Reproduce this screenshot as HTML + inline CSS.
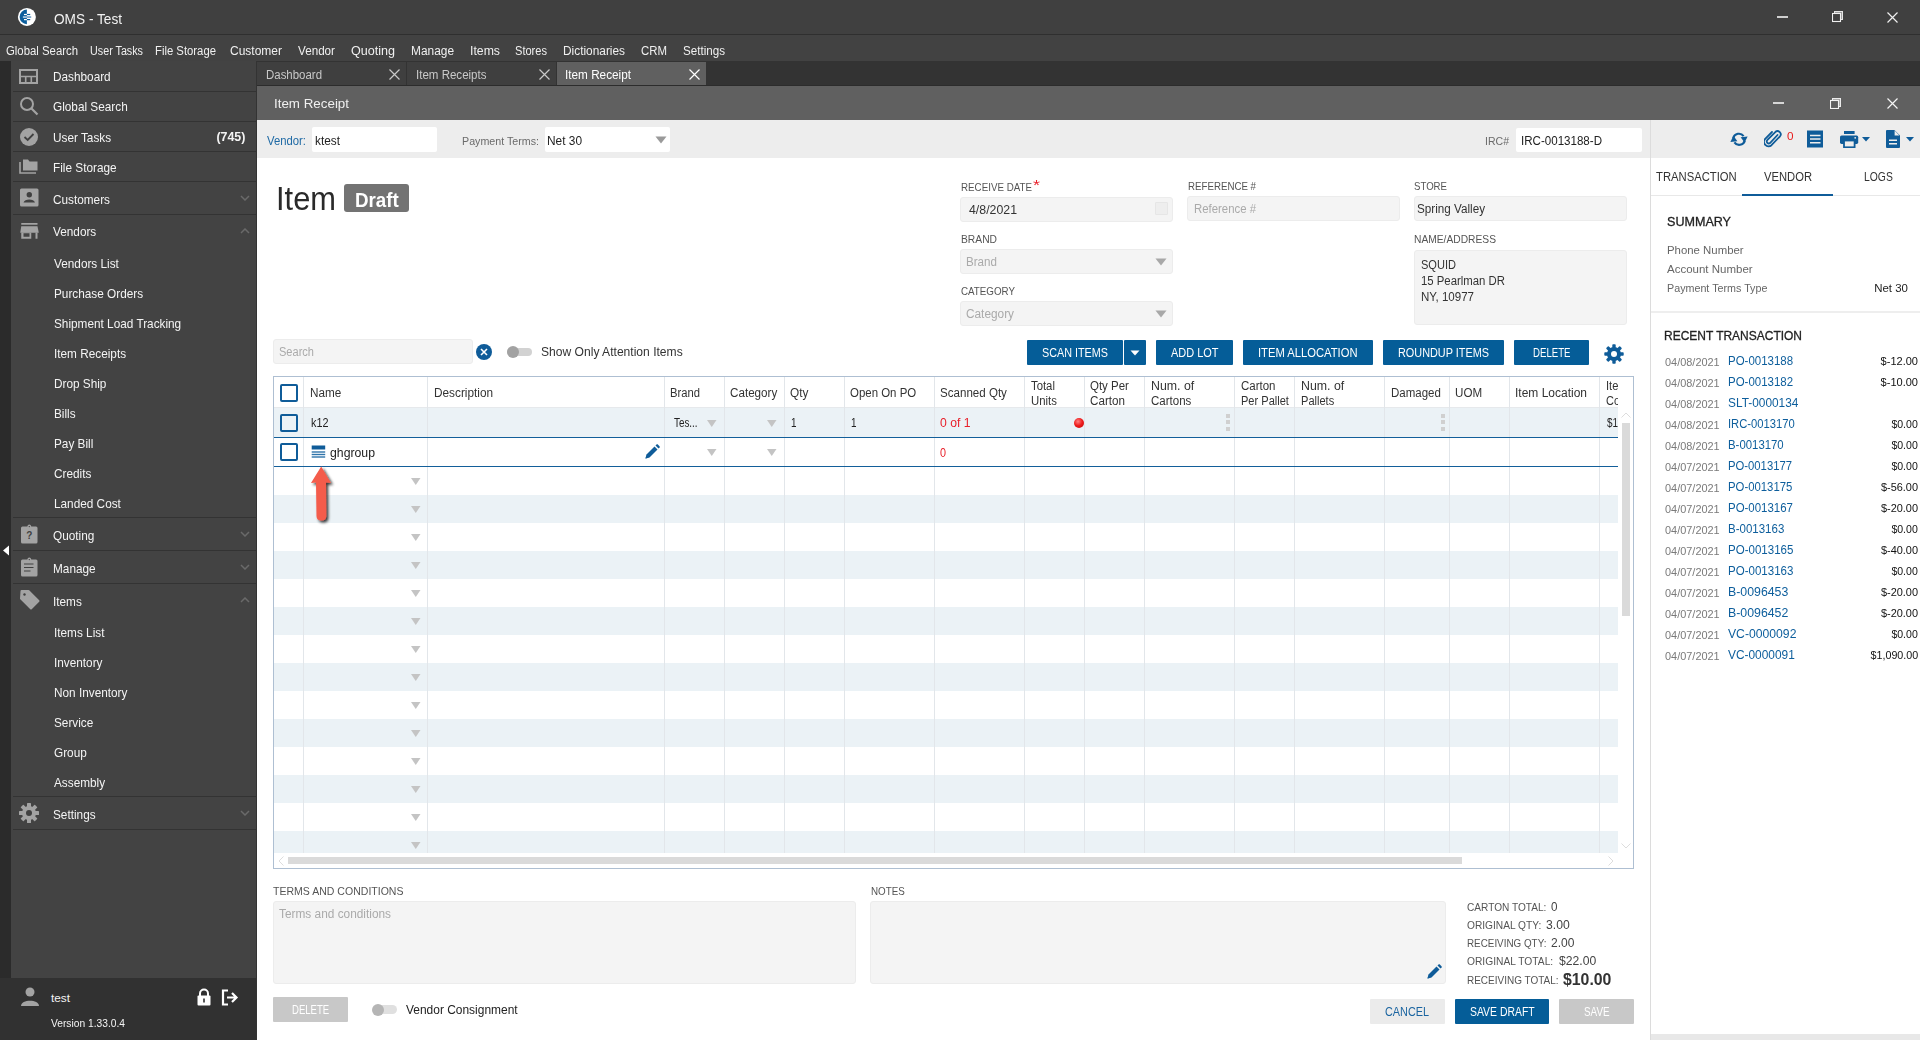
<!DOCTYPE html>
<html><head><meta charset="utf-8"><style>
html,body{margin:0;padding:0;width:1920px;height:1040px;overflow:hidden;background:#fff;font-family:"Liberation Sans",sans-serif;}
body>div,body>svg{position:absolute;box-sizing:border-box;}
</style></head><body>
<div style="left:0px;top:0px;width:1920px;height:34px;background:#404040;"></div>
<div style="left:0px;top:34px;width:1920px;height:1px;background:#2f2f2f;"></div>
<div style="left:0px;top:35px;width:1920px;height:26px;background:#424242;"></div>
<div style="left:0px;top:61px;width:11px;height:979px;background:#2b2b2b;"></div>
<div style="left:11px;top:61px;width:245px;height:917px;background:#434343;"></div>
<div style="left:0px;top:978px;width:256px;height:62px;background:#313131;"></div>
<div style="left:256px;top:61px;width:1px;height:979px;background:#333333;"></div>
<div style="left:257px;top:61px;width:1663px;height:25px;background:#333333;"></div>
<div style="left:257px;top:62px;width:149px;height:23px;background:#3f3f3f;"></div>
<div style="left:407px;top:62px;width:149px;height:23px;background:#3f3f3f;"></div>
<div style="left:557px;top:62px;width:149px;height:23px;background:#606060;"></div>
<div style="left:257px;top:86px;width:1663px;height:34px;background:#606060;"></div>
<div style="left:257px;top:120px;width:1663px;height:38px;background:#ededed;"></div>
<div style="left:257px;top:158px;width:1393px;height:882px;background:#ffffff;"></div>
<div style="left:1650px;top:120px;width:1px;height:920px;background:#dcdcdc;"></div>
<div style="left:1651px;top:158px;width:269px;height:882px;background:#ffffff;"></div>
<svg style="left:17px;top:7px;" width="20" height="20" viewBox="0 0 20 20"><circle cx="9.9" cy="9.9" r="9" fill="#ffffff"/><path d="M9.9 2.6 A7.3 7.3 0 0 0 9.9 17.2 Z" fill="#0b5e9d"/><rect x="7" y="6.9" width="3" height="1.2" fill="#fff"/><rect x="9.9" y="6.9" width="3.3" height="1.2" fill="#0b5e9d"/><rect x="5.9" y="9.4" width="4" height="1.3" fill="#dfe9f2"/><rect x="9.9" y="9.4" width="4.3" height="1.3" fill="#4a86b8"/><rect x="7" y="12" width="3" height="1.2" fill="#fff"/><rect x="9.9" y="12" width="3.3" height="1.2" fill="#0b5e9d"/></svg>
<div style="left:54px;top:8.5px;line-height:20px;font-size:14.5px;color:#f2f2f2;transform:scaleX(0.9412);transform-origin:0 50%;white-space:nowrap;">OMS - Test</div>
<div style="left:1777px;top:16px;width:11px;height:2px;background:#cfcfcf;"></div>
<svg style="left:1832px;top:11px;" width="12" height="12" viewBox="0 0 12 12"><rect x="2.5" y="0.5" width="8" height="8" fill="#9a9a9a" stroke="#e6e6e6"/><rect x="0.5" y="2.5" width="8" height="8" fill="#404040" stroke="#f0f0f0" stroke-width="1.1"/></svg>
<svg style="left:1887px;top:12px;" width="11" height="11" viewBox="0 0 11 11"><path d="M0.5 0.5 L10.5 10.5 M10.5 0.5 L0.5 10.5" stroke="#f0f0f0" stroke-width="1.2"/></svg>
<div style="left:6px;top:41.2px;line-height:20px;font-size:12px;color:#f0f0f0;transform:scaleX(0.9468);transform-origin:0 50%;white-space:nowrap;">Global Search</div>
<div style="left:90px;top:41.2px;line-height:20px;font-size:12px;color:#f0f0f0;transform:scaleX(0.8964);transform-origin:0 50%;white-space:nowrap;">User Tasks</div>
<div style="left:155px;top:41.2px;line-height:20px;font-size:12px;color:#f0f0f0;transform:scaleX(0.9428);transform-origin:0 50%;white-space:nowrap;">File Storage</div>
<div style="left:230px;top:41.2px;line-height:20px;font-size:12px;color:#f0f0f0;transform:scaleX(0.9997);transform-origin:0 50%;white-space:nowrap;">Customer</div>
<div style="left:298px;top:41.2px;line-height:20px;font-size:12px;color:#f0f0f0;transform:scaleX(0.9728);transform-origin:0 50%;white-space:nowrap;">Vendor</div>
<div style="left:351px;top:41.2px;line-height:20px;font-size:12px;color:#f0f0f0;transform:scaleX(1.0469);transform-origin:0 50%;white-space:nowrap;">Quoting</div>
<div style="left:411px;top:41.2px;line-height:20px;font-size:12px;color:#f0f0f0;transform:scaleX(0.9915);transform-origin:0 50%;white-space:nowrap;">Manage</div>
<div style="left:470px;top:41.2px;line-height:20px;font-size:12px;color:#f0f0f0;transform:scaleX(1.0226);transform-origin:0 50%;white-space:nowrap;">Items</div>
<div style="left:515px;top:41.2px;line-height:20px;font-size:12px;color:#f0f0f0;transform:scaleX(0.9226);transform-origin:0 50%;white-space:nowrap;">Stores</div>
<div style="left:563px;top:41.2px;line-height:20px;font-size:12px;color:#f0f0f0;transform:scaleX(0.9890);transform-origin:0 50%;white-space:nowrap;">Dictionaries</div>
<div style="left:641px;top:41.2px;line-height:20px;font-size:12px;color:#f0f0f0;transform:scaleX(0.9514);transform-origin:0 50%;white-space:nowrap;">CRM</div>
<div style="left:683px;top:41.2px;line-height:20px;font-size:12px;color:#f0f0f0;transform:scaleX(0.9686);transform-origin:0 50%;white-space:nowrap;">Settings</div>
<div style="left:13px;top:91px;width:243px;height:1px;background:#333333;"></div>
<div style="left:13px;top:121px;width:243px;height:1px;background:#333333;"></div>
<div style="left:13px;top:151px;width:243px;height:1px;background:#333333;"></div>
<div style="left:13px;top:181px;width:243px;height:1px;background:#333333;"></div>
<div style="left:13px;top:214px;width:243px;height:1px;background:#333333;"></div>
<div style="left:13px;top:517px;width:243px;height:1px;background:#333333;"></div>
<div style="left:13px;top:550px;width:243px;height:1px;background:#333333;"></div>
<div style="left:13px;top:583px;width:243px;height:1px;background:#333333;"></div>
<div style="left:13px;top:796px;width:243px;height:1px;background:#333333;"></div>
<div style="left:13px;top:829px;width:243px;height:1px;background:#333333;"></div>
<div style="left:53px;top:67.2px;line-height:20px;font-size:12.4px;color:#f4f4f4;transform:scaleX(0.9516);transform-origin:0 50%;white-space:nowrap;">Dashboard</div>
<div style="left:53px;top:97.2px;line-height:20px;font-size:12.4px;color:#f4f4f4;transform:scaleX(0.9516);transform-origin:0 50%;white-space:nowrap;">Global Search</div>
<div style="left:53px;top:127.7px;line-height:20px;font-size:12.4px;color:#f4f4f4;transform:scaleX(0.9516);transform-origin:0 50%;white-space:nowrap;">User Tasks</div>
<div style="left:53px;top:157.7px;line-height:20px;font-size:12.4px;color:#f4f4f4;transform:scaleX(0.9516);transform-origin:0 50%;white-space:nowrap;">File Storage</div>
<div style="left:53px;top:189.7px;line-height:20px;font-size:12.4px;color:#f4f4f4;transform:scaleX(0.9516);transform-origin:0 50%;white-space:nowrap;">Customers</div>
<div style="left:53px;top:222.2px;line-height:20px;font-size:12.4px;color:#f4f4f4;transform:scaleX(0.9516);transform-origin:0 50%;white-space:nowrap;">Vendors</div>
<div style="left:53px;top:525.7px;line-height:20px;font-size:12.4px;color:#f4f4f4;transform:scaleX(0.9516);transform-origin:0 50%;white-space:nowrap;">Quoting</div>
<div style="left:53px;top:558.7px;line-height:20px;font-size:12.4px;color:#f4f4f4;transform:scaleX(0.9516);transform-origin:0 50%;white-space:nowrap;">Manage</div>
<div style="left:53px;top:591.7px;line-height:20px;font-size:12.4px;color:#f4f4f4;transform:scaleX(0.9516);transform-origin:0 50%;white-space:nowrap;">Items</div>
<div style="left:53px;top:804.7px;line-height:20px;font-size:12.4px;color:#f4f4f4;transform:scaleX(0.9516);transform-origin:0 50%;white-space:nowrap;">Settings</div>
<div style="right:1674.5px;top:127.3px;line-height:20px;font-size:12.6px;color:#f4f4f4;font-weight:700;transform:scaleX(0.9859);transform-origin:100% 50%;white-space:nowrap;">(745)</div>
<div style="left:54px;top:254.0px;line-height:20px;font-size:12.4px;color:#f4f4f4;transform:scaleX(0.9516);transform-origin:0 50%;white-space:nowrap;">Vendors List</div>
<div style="left:54px;top:283.9px;line-height:20px;font-size:12.4px;color:#f4f4f4;transform:scaleX(0.9516);transform-origin:0 50%;white-space:nowrap;">Purchase Orders</div>
<div style="left:54px;top:313.9px;line-height:20px;font-size:12.4px;color:#f4f4f4;transform:scaleX(0.9516);transform-origin:0 50%;white-space:nowrap;">Shipment Load Tracking</div>
<div style="left:54px;top:343.9px;line-height:20px;font-size:12.4px;color:#f4f4f4;transform:scaleX(0.9516);transform-origin:0 50%;white-space:nowrap;">Item Receipts</div>
<div style="left:54px;top:374.0px;line-height:20px;font-size:12.4px;color:#f4f4f4;transform:scaleX(0.9516);transform-origin:0 50%;white-space:nowrap;">Drop Ship</div>
<div style="left:54px;top:403.9px;line-height:20px;font-size:12.4px;color:#f4f4f4;transform:scaleX(0.9516);transform-origin:0 50%;white-space:nowrap;">Bills</div>
<div style="left:54px;top:434.0px;line-height:20px;font-size:12.4px;color:#f4f4f4;transform:scaleX(0.9516);transform-origin:0 50%;white-space:nowrap;">Pay Bill</div>
<div style="left:54px;top:464.0px;line-height:20px;font-size:12.4px;color:#f4f4f4;transform:scaleX(0.9516);transform-origin:0 50%;white-space:nowrap;">Credits</div>
<div style="left:54px;top:493.9px;line-height:20px;font-size:12.4px;color:#f4f4f4;transform:scaleX(0.9516);transform-origin:0 50%;white-space:nowrap;">Landed Cost</div>
<div style="left:54px;top:622.9px;line-height:20px;font-size:12.4px;color:#f4f4f4;transform:scaleX(0.9516);transform-origin:0 50%;white-space:nowrap;">Items List</div>
<div style="left:54px;top:653.0px;line-height:20px;font-size:12.4px;color:#f4f4f4;transform:scaleX(0.9516);transform-origin:0 50%;white-space:nowrap;">Inventory</div>
<div style="left:54px;top:683.0px;line-height:20px;font-size:12.4px;color:#f4f4f4;transform:scaleX(0.9516);transform-origin:0 50%;white-space:nowrap;">Non Inventory</div>
<div style="left:54px;top:713.0px;line-height:20px;font-size:12.4px;color:#f4f4f4;transform:scaleX(0.9516);transform-origin:0 50%;white-space:nowrap;">Service</div>
<div style="left:54px;top:743.0px;line-height:20px;font-size:12.4px;color:#f4f4f4;transform:scaleX(0.9516);transform-origin:0 50%;white-space:nowrap;">Group</div>
<div style="left:54px;top:772.9px;line-height:20px;font-size:12.4px;color:#f4f4f4;transform:scaleX(0.9516);transform-origin:0 50%;white-space:nowrap;">Assembly</div>
<svg style="left:240px;top:195px;" width="10" height="6" viewBox="0 0 10 6"><path d="M1 1 L5 5 L9 1" fill="none" stroke="#6a6a6a" stroke-width="1.5"/></svg>
<svg style="left:240px;top:228px;" width="10" height="6" viewBox="0 0 10 6"><path d="M1 5 L5 1 L9 5" fill="none" stroke="#6a6a6a" stroke-width="1.5"/></svg>
<svg style="left:240px;top:531px;" width="10" height="6" viewBox="0 0 10 6"><path d="M1 1 L5 5 L9 1" fill="none" stroke="#6a6a6a" stroke-width="1.5"/></svg>
<svg style="left:240px;top:564px;" width="10" height="6" viewBox="0 0 10 6"><path d="M1 1 L5 5 L9 1" fill="none" stroke="#6a6a6a" stroke-width="1.5"/></svg>
<svg style="left:240px;top:597px;" width="10" height="6" viewBox="0 0 10 6"><path d="M1 5 L5 1 L9 5" fill="none" stroke="#6a6a6a" stroke-width="1.5"/></svg>
<svg style="left:240px;top:810px;" width="10" height="6" viewBox="0 0 10 6"><path d="M1 1 L5 5 L9 1" fill="none" stroke="#6a6a6a" stroke-width="1.5"/></svg>
<svg style="left:19px;top:69px;" width="19" height="15" viewBox="0 0 19 15"><rect x="1" y="1" width="17" height="13" fill="none" stroke="#a3a3a3" stroke-width="2"/><path d="M1 7.5 H18 M6.7 7.5 V14 M12.3 7.5 V14" stroke="#a3a3a3" stroke-width="1.6"/></svg>
<svg style="left:19px;top:96px;" width="20" height="20" viewBox="0 0 20 20"><circle cx="8" cy="8" r="6" fill="none" stroke="#a3a3a3" stroke-width="2"/><path d="M12.5 12.5 L18.5 18.5" stroke="#a3a3a3" stroke-width="2.2"/></svg>
<svg style="left:19px;top:127px;" width="20" height="20" viewBox="0 0 20 20"><circle cx="10" cy="10" r="9" fill="#a3a3a3"/><path d="M5.5 10 L8.7 13 L14.5 7" fill="none" stroke="#404040" stroke-width="1.8"/></svg>
<svg style="left:19px;top:158px;" width="20" height="17" viewBox="0 0 20 17"><path d="M1 4 V15 H17" fill="none" stroke="#a3a3a3" stroke-width="1.6"/><path d="M4 1.5 H9 L10.5 3.5 H18.5 V12.5 H4 Z" fill="#a3a3a3"/></svg>
<svg style="left:20px;top:188px;" width="19" height="19" viewBox="0 0 19 19"><rect x="0" y="0.5" width="18.5" height="18" rx="1.5" fill="#a3a3a3"/><circle cx="9.3" cy="6.8" r="2.7" fill="#404040"/><path d="M3.5 14.5 C4.5 10.5 14 10.5 15 14.5 Z" fill="#404040"/></svg>
<svg style="left:20px;top:222px;" width="20" height="18" viewBox="0 0 20 18"><rect x="1.25" y="1" width="16.25" height="1.75" fill="#a3a3a3"/><path d="M1.25 4.25 H17.5 L18.75 10.75 H0.25 Z" fill="#a3a3a3"/><rect x="1.25" y="10.5" width="10" height="6.25" fill="#a3a3a3"/><rect x="3.5" y="11.25" width="6" height="3.5" fill="#434343"/><rect x="15.5" y="10.5" width="2" height="6.25" fill="#a3a3a3"/></svg>
<svg style="left:20px;top:524px;" width="19" height="20" viewBox="0 0 19 20"><rect x="1" y="2.5" width="16.5" height="17" rx="1.5" fill="#a3a3a3"/><circle cx="9.3" cy="2.3" r="1.8" fill="#a3a3a3"/><circle cx="9.3" cy="2.6" r="0.7" fill="#404040"/><text x="9.3" y="15" font-size="10" font-weight="700" fill="#404040" text-anchor="middle" font-family="Liberation Sans">?</text></svg>
<svg style="left:20px;top:557px;" width="19" height="20" viewBox="0 0 19 20"><rect x="1" y="2.5" width="16.5" height="17" rx="1.5" fill="#a3a3a3"/><circle cx="9.3" cy="2.3" r="1.8" fill="#a3a3a3"/><circle cx="9.3" cy="2.6" r="0.7" fill="#404040"/><path d="M4 7 H13.5 M4 10.5 H13.5 M4 14 H10.5" stroke="#404040" stroke-width="1.2"/></svg>
<svg style="left:19px;top:590px;" width="21" height="21" viewBox="0 0 21 21"><path d="M2.5 1 H9.5 L19.5 11 L12 18.5 L2 8.5 Z" fill="#a3a3a3" stroke="#a3a3a3" stroke-width="2" stroke-linejoin="round"/><circle cx="5.5" cy="4.5" r="1.2" fill="#404040"/></svg>
<svg style="left:19px;top:803px;" width="20" height="20" viewBox="0 0 20 20"><rect x="8" y="0" width="4" height="20" rx="0.6" fill="#a3a3a3" transform="rotate(0 10 10)"/><rect x="8" y="0" width="4" height="20" rx="0.6" fill="#a3a3a3" transform="rotate(45 10 10)"/><rect x="8" y="0" width="4" height="20" rx="0.6" fill="#a3a3a3" transform="rotate(90 10 10)"/><rect x="8" y="0" width="4" height="20" rx="0.6" fill="#a3a3a3" transform="rotate(135 10 10)"/><circle cx="10" cy="10" r="7" fill="#a3a3a3"/><circle cx="10" cy="10" r="3" fill="#404040"/></svg>
<svg style="left:2px;top:545px;" width="8" height="11" viewBox="0 0 8 11"><path d="M1 5.5 L7 0.5 V10.5 Z" fill="#ffffff"/></svg>
<svg style="left:20px;top:987px;" width="20" height="20" viewBox="0 0 20 20"><circle cx="10" cy="5" r="4.5" fill="#a3a3a3"/><path d="M1 19 C1 12 19 12 19 19 Z" fill="#a3a3a3"/></svg>
<div style="left:51px;top:987.5px;line-height:20px;font-size:11.8px;color:#f4f4f4;white-space:nowrap;">test</div>
<div style="left:51px;top:1013.0px;line-height:20px;font-size:11px;color:#f4f4f4;transform:scaleX(0.9308);transform-origin:0 50%;white-space:nowrap;">Version 1.33.0.4</div>
<svg style="left:196px;top:988px;" width="16" height="18" viewBox="0 0 16 18"><path d="M4 8 V5.5 A4 4 0 0 1 12 5.5 V8" fill="none" stroke="#fff" stroke-width="2"/><rect x="1.5" y="7.5" width="13" height="10" rx="1" fill="#fff"/><rect x="7.2" y="10.5" width="1.6" height="4" fill="#2e2e2e"/></svg>
<svg style="left:221px;top:989px;" width="18" height="17" viewBox="0 0 18 17"><path d="M7 1.5 H2 V15.5 H7" fill="none" stroke="#fff" stroke-width="2.2"/><path d="M6 8.5 H15 M11 4 L15.5 8.5 L11 13" fill="none" stroke="#fff" stroke-width="2.2"/></svg>
<div style="left:265.5px;top:65.0px;line-height:20px;font-size:12px;color:#c9c9c9;transform:scaleX(0.9539);transform-origin:0 50%;white-space:nowrap;">Dashboard</div>
<div style="left:415.5px;top:65.0px;line-height:20px;font-size:12px;color:#c9c9c9;transform:scaleX(0.9610);transform-origin:0 50%;white-space:nowrap;">Item Receipts</div>
<div style="left:565px;top:65.0px;line-height:20px;font-size:12px;color:#ffffff;transform:scaleX(0.9798);transform-origin:0 50%;white-space:nowrap;">Item Receipt</div>
<svg style="left:389px;top:69px;" width="11" height="11" viewBox="0 0 11 11"><path d="M0.5 0.5 L10.5 10.5 M10.5 0.5 L0.5 10.5" stroke="#c9c9c9" stroke-width="1.2"/></svg>
<svg style="left:539px;top:69px;" width="11" height="11" viewBox="0 0 11 11"><path d="M0.5 0.5 L10.5 10.5 M10.5 0.5 L0.5 10.5" stroke="#c9c9c9" stroke-width="1.2"/></svg>
<svg style="left:689px;top:69px;" width="11" height="11" viewBox="0 0 11 11"><path d="M0.5 0.5 L10.5 10.5 M10.5 0.5 L0.5 10.5" stroke="#ffffff" stroke-width="1.2"/></svg>
<div style="left:257px;top:85px;width:1663px;height:1px;background:#2c2c2c;"></div>
<div style="left:273.5px;top:94.0px;line-height:20px;font-size:13.5px;color:#f0f0f0;transform:scaleX(0.9897);transform-origin:0 50%;white-space:nowrap;">Item Receipt</div>
<div style="left:1773px;top:102px;width:11px;height:2px;background:#d6d6d6;"></div>
<svg style="left:1830px;top:98px;" width="12" height="11" viewBox="0 0 12 11"><rect x="2.5" y="0.5" width="8" height="8" fill="#a8a8a8" stroke="#ececec"/><rect x="0.5" y="2.5" width="8" height="8" fill="#606060" stroke="#f4f4f4" stroke-width="1.1"/></svg>
<svg style="left:1887px;top:98px;" width="11" height="11" viewBox="0 0 11 11"><path d="M0.5 0.5 L10.5 10.5 M10.5 0.5 L0.5 10.5" stroke="#f4f4f4" stroke-width="1.2"/></svg>
<div style="left:267px;top:130.8px;line-height:20px;font-size:12px;color:#1f6aa5;transform:scaleX(0.9427);transform-origin:0 50%;white-space:nowrap;">Vendor:</div>
<div style="left:312px;top:127px;width:125px;height:25px;background:#ffffff;border-radius:2px;"></div>
<div style="left:314.5px;top:130.8px;line-height:20px;font-size:12px;color:#222222;transform:scaleX(0.9865);transform-origin:0 50%;white-space:nowrap;">ktest</div>
<div style="left:462px;top:130.8px;line-height:20px;font-size:11.5px;color:#6b6b6b;transform:scaleX(0.9291);transform-origin:0 50%;white-space:nowrap;">Payment Terms:</div>
<div style="left:545px;top:127px;width:125px;height:25px;background:#ffffff;border-radius:2px;"></div>
<div style="left:547px;top:130.8px;line-height:20px;font-size:12px;color:#222222;transform:scaleX(0.9899);transform-origin:0 50%;white-space:nowrap;">Net 30</div>
<svg style="left:655px;top:136px;" width="12" height="8" viewBox="0 0 12 8"><path d="M0.5 0.5 H11.5 L6 7.5 Z" fill="#9a9a9a"/></svg>
<div style="left:1485px;top:130.8px;line-height:20px;font-size:11.5px;color:#6b6b6b;transform:scaleX(0.9160);transform-origin:0 50%;white-space:nowrap;">IRC#</div>
<div style="left:1516px;top:128px;width:126px;height:24px;background:#ffffff;border-radius:2px;"></div>
<div style="left:1521px;top:130.8px;line-height:20px;font-size:12px;color:#222222;transform:scaleX(0.9638);transform-origin:0 50%;white-space:nowrap;">IRC-0013188-D</div>
<svg style="left:1729px;top:130px;" width="20" height="18" viewBox="0 0 20 18"><path d="M4.2 8.2 A5.8 5.8 0 0 1 14.6 6.2" fill="none" stroke="#0f5c99" stroke-width="2.1"/><path d="M11.6 7.2 L18.6 6.4 L15.6 12.6 Z" fill="#0f5c99"/><path d="M15.8 10.6 A5.8 5.8 0 0 1 5.4 12.3" fill="none" stroke="#0f5c99" stroke-width="2.1"/><path d="M8.4 11.2 L1.4 12 L4.4 5.8 Z" fill="#0f5c99"/></svg>
<svg style="left:1764px;top:129px;" width="18" height="20" viewBox="0 0 18 20"><path d="M13.5 6 L6 14 A2 2 0 0 1 3.2 11.2 L11.5 2.8 A3.2 3.2 0 0 1 16 7.3 L7.5 16.2 A4.5 4.5 0 0 1 1.2 9.8 L8 3" fill="none" stroke="#0f5c99" stroke-width="1.8" stroke-linecap="round"/></svg>
<div style="left:1786.5px;top:127.0px;line-height:20px;font-size:10px;color:#e81b1b;transform:scaleX(1.1687);transform-origin:0 50%;white-space:nowrap;">0</div>
<svg style="left:1806px;top:129px;" width="18" height="20" viewBox="0 0 18 20"><path d="M1 1 L2 2 L3 1 L4 2 L5 1 L6 2 L7 1 L8 2 L9 1 L10 2 L11 1 L12 2 L13 1 L14 2 L15 1 L16 2 L17 1 V19 L16 18 L15 19 L14 18 L13 19 L12 18 L11 19 L10 18 L9 19 L8 18 L7 19 L6 18 L5 19 L4 18 L3 19 L2 18 L1 19 Z" fill="#0f5c99"/><path d="M4 6.6 H14.5 M4 10.1 H14.5 M4 13.8 H14.5" stroke="#ededed" stroke-width="1.5"/></svg>
<svg style="left:1840px;top:130px;" width="19" height="18" viewBox="0 0 19 18"><rect x="4" y="1" width="10.6" height="3" fill="#0f5c99"/><rect x="0" y="5.6" width="18.2" height="8.3" rx="1.6" fill="#0f5c99"/><rect x="4" y="10.5" width="10.6" height="6.8" fill="#ededed" stroke="#0f5c99" stroke-width="1.8"/><circle cx="15.2" cy="7.8" r="0.9" fill="#ededed"/></svg>
<svg style="left:1862px;top:137px;" width="8" height="5" viewBox="0 0 8 5"><path d="M0 0 H8 L4 4.5 Z" fill="#0f5c99"/></svg>
<svg style="left:1886px;top:129px;" width="15" height="20" viewBox="0 0 15 20"><path d="M0 2 Q0 1 1 1 H8.4 L14 6.6 V18 Q14 19 13 19 H1 Q0 19 0 18 Z" fill="#0f5c99"/><path d="M8.6 1.6 V6.4 H13.4 Z" fill="#ededed"/><path d="M3 11.2 H11 M3 14.8 H11" stroke="#ededed" stroke-width="1.6"/></svg>
<svg style="left:1906px;top:137px;" width="8" height="5" viewBox="0 0 8 5"><path d="M0 0 H8 L4 4.5 Z" fill="#0f5c99"/></svg>
<div style="left:1656px;top:166.5px;line-height:20px;font-size:12px;color:#333333;transform:scaleX(0.9383);transform-origin:0 50%;white-space:nowrap;">TRANSACTION</div>
<div style="left:1763.7px;top:166.5px;line-height:20px;font-size:12px;color:#333333;transform:scaleX(0.9349);transform-origin:0 50%;white-space:nowrap;">VENDOR</div>
<div style="left:1864.2px;top:166.5px;line-height:20px;font-size:12px;color:#333333;transform:scaleX(0.8637);transform-origin:0 50%;white-space:nowrap;">LOGS</div>
<div style="left:1651px;top:195px;width:269px;height:1px;background:#e8e8e8;"></div>
<div style="left:1742px;top:193.5px;width:91px;height:2.5px;background:#0f5c99;"></div>
<div style="left:275.8px;top:188.8px;line-height:20px;font-size:33px;color:#2a2a2a;transform:scaleX(0.9349);transform-origin:0 50%;white-space:nowrap;">Item</div>
<div style="left:344px;top:184px;width:65px;height:28px;background:#737373;border-radius:3px;"></div>
<div style="left:355px;top:190.0px;line-height:20px;font-size:20px;color:#ffffff;font-weight:700;transform:scaleX(0.9385);transform-origin:0 50%;white-space:nowrap;">Draft</div>
<div style="left:961px;top:177.3px;line-height:20px;font-size:11.5px;color:#555555;transform:scaleX(0.8503);transform-origin:0 50%;white-space:nowrap;">RECEIVE DATE</div>
<div style="left:1032.5px;top:174.5px;line-height:20px;font-size:14px;color:#e8202a;transform:scaleX(1.2849);transform-origin:0 50%;white-space:nowrap;">*</div>
<div style="left:960px;top:197px;width:213px;height:25px;background:#f4f4f4;border-radius:3px;border:1px solid #ececec;"></div>
<div style="left:969px;top:200.3px;line-height:20px;font-size:12px;color:#333333;transform:scaleX(1.0276);transform-origin:0 50%;white-space:nowrap;">4/8/2021</div>
<div style="left:1155px;top:202px;width:13px;height:13px;background:#eeeeee;border-radius:1px;border:1px solid #e6e6e6;"></div>
<div style="left:1187.5px;top:176.3px;line-height:20px;font-size:11.5px;color:#555555;transform:scaleX(0.8445);transform-origin:0 50%;white-space:nowrap;">REFERENCE #</div>
<div style="left:1187px;top:196px;width:213px;height:25px;background:#f4f4f4;border-radius:3px;border:1px solid #ececec;"></div>
<div style="left:1193.5px;top:198.5px;line-height:20px;font-size:12px;color:#aaaaaa;transform:scaleX(0.9484);transform-origin:0 50%;white-space:nowrap;">Reference #</div>
<div style="left:961px;top:228.6px;line-height:20px;font-size:11.5px;color:#555555;transform:scaleX(0.8943);transform-origin:0 50%;white-space:nowrap;">BRAND</div>
<div style="left:960px;top:249px;width:213px;height:25px;background:#f4f4f4;border-radius:3px;border:1px solid #ececec;"></div>
<div style="left:965.5px;top:251.5px;line-height:20px;font-size:12px;color:#aaaaaa;transform:scaleX(0.9681);transform-origin:0 50%;white-space:nowrap;">Brand</div>
<svg style="left:1155px;top:258px;" width="12" height="8" viewBox="0 0 12 8"><path d="M0.5 0.5 H11.5 L6 7.5 Z" fill="#a8a8a8"/></svg>
<div style="left:961px;top:280.6px;line-height:20px;font-size:11.5px;color:#555555;transform:scaleX(0.8507);transform-origin:0 50%;white-space:nowrap;">CATEGORY</div>
<div style="left:960px;top:301px;width:213px;height:25px;background:#f4f4f4;border-radius:3px;border:1px solid #ececec;"></div>
<div style="left:965.5px;top:303.5px;line-height:20px;font-size:12px;color:#aaaaaa;transform:scaleX(0.9858);transform-origin:0 50%;white-space:nowrap;">Category</div>
<svg style="left:1155px;top:310px;" width="12" height="8" viewBox="0 0 12 8"><path d="M0.5 0.5 H11.5 L6 7.5 Z" fill="#a8a8a8"/></svg>
<div style="left:1414px;top:176.3px;line-height:20px;font-size:11.5px;color:#555555;transform:scaleX(0.8374);transform-origin:0 50%;white-space:nowrap;">STORE</div>
<div style="left:1414px;top:196px;width:213px;height:25px;background:#f4f4f4;border-radius:3px;border:1px solid #ececec;"></div>
<div style="left:1416.5px;top:198.5px;line-height:20px;font-size:12px;color:#333333;transform:scaleX(0.9740);transform-origin:0 50%;white-space:nowrap;">Spring Valley</div>
<div style="left:1414px;top:228.7px;line-height:20px;font-size:11.5px;color:#555555;transform:scaleX(0.8911);transform-origin:0 50%;white-space:nowrap;">NAME/ADDRESS</div>
<div style="left:1414px;top:250px;width:213px;height:75px;background:#f4f4f4;border-radius:3px;border:1px solid #ececec;"></div>
<div style="left:1420.5px;top:254.5px;line-height:20px;font-size:12px;color:#333333;transform:scaleX(0.9209);transform-origin:0 50%;white-space:nowrap;">SQUID</div>
<div style="left:1420.5px;top:270.7px;line-height:20px;font-size:12px;color:#333333;transform:scaleX(0.9469);transform-origin:0 50%;white-space:nowrap;">15 Pearlman DR</div>
<div style="left:1420.5px;top:286.7px;line-height:20px;font-size:12px;color:#333333;transform:scaleX(0.9608);transform-origin:0 50%;white-space:nowrap;">NY, 10977</div>
<div style="left:273px;top:339px;width:200px;height:25px;background:#f4f4f4;border-radius:3px;border:1px solid #ececec;"></div>
<div style="left:279px;top:341.5px;line-height:20px;font-size:12px;color:#aaaaaa;transform:scaleX(0.9205);transform-origin:0 50%;white-space:nowrap;">Search</div>
<svg style="left:476px;top:344px;" width="16" height="16" viewBox="0 0 16 16"><circle cx="8" cy="8" r="8" fill="#0f5c99"/><path d="M5 5 L11 11 M11 5 L5 11" stroke="#fff" stroke-width="1.6"/></svg>
<div style="left:507px;top:348px;width:25px;height:8px;background:#d2d2d2;border-radius:4px;"></div>
<svg style="left:506px;top:345px;" width="14" height="14" viewBox="0 0 14 14"><circle cx="7" cy="7" r="6" fill="#a2a2a2"/></svg>
<div style="left:541px;top:341.7px;line-height:20px;font-size:12px;color:#333333;transform:scaleX(1.0068);transform-origin:0 50%;white-space:nowrap;">Show Only Attention Items</div>
<div style="left:1027px;top:340px;width:96px;height:25px;background:#055d98;border-radius:1px;"></div>
<div style="left:1042.0px;top:342.5px;line-height:20px;font-size:12px;color:#ffffff;transform:scaleX(0.8999);transform-origin:0 50%;white-space:nowrap;">SCAN ITEMS</div>
<div style="left:1124px;top:340px;width:22px;height:25px;background:#055d98;border-radius:1px;"></div>
<svg style="left:1130px;top:350px;" width="10" height="6" viewBox="0 0 10 6"><path d="M0.5 0.5 H9.5 L5 5.5 Z" fill="#ffffff"/></svg>
<div style="left:1156px;top:340px;width:77px;height:25px;background:#055d98;border-radius:1px;"></div>
<div style="left:1170.75px;top:342.5px;line-height:20px;font-size:12px;color:#ffffff;transform:scaleX(0.9133);transform-origin:0 50%;white-space:nowrap;">ADD LOT</div>
<div style="left:1243px;top:340px;width:130px;height:25px;background:#055d98;border-radius:1px;"></div>
<div style="left:1258.25px;top:342.5px;line-height:20px;font-size:12px;color:#ffffff;transform:scaleX(0.9346);transform-origin:0 50%;white-space:nowrap;">ITEM ALLOCATION</div>
<div style="left:1383px;top:340px;width:121px;height:25px;background:#055d98;border-radius:1px;"></div>
<div style="left:1398.0px;top:342.5px;line-height:20px;font-size:12px;color:#ffffff;transform:scaleX(0.9059);transform-origin:0 50%;white-space:nowrap;">ROUNDUP ITEMS</div>
<div style="left:1514px;top:340px;width:75px;height:25px;background:#055d98;border-radius:1px;"></div>
<div style="left:1532.75px;top:342.5px;line-height:20px;font-size:12px;color:#ffffff;transform:scaleX(0.8033);transform-origin:0 50%;white-space:nowrap;">DELETE</div>
<svg style="left:1604px;top:344px;" width="20" height="20" viewBox="0 0 20 20"><rect x="8.3" y="0.3" width="3.4" height="19.4" rx="0.8" fill="#0f5c99" transform="rotate(0 10 10)"/><rect x="8.3" y="0.3" width="3.4" height="19.4" rx="0.8" fill="#0f5c99" transform="rotate(45 10 10)"/><rect x="8.3" y="0.3" width="3.4" height="19.4" rx="0.8" fill="#0f5c99" transform="rotate(90 10 10)"/><rect x="8.3" y="0.3" width="3.4" height="19.4" rx="0.8" fill="#0f5c99" transform="rotate(135 10 10)"/><circle cx="10" cy="10" r="7" fill="#0f5c99"/><circle cx="10" cy="10" r="3" fill="#ffffff"/></svg>
<div style="left:273px;top:376px;width:1361px;height:493px;background:#ffffff;border:1px solid #aebfd2;"></div>
<div style="left:274px;top:408px;width:1344px;height:29px;background:#ebf2f6;"></div>
<div style="left:274px;top:495px;width:1344px;height:28px;background:#ebf2f6;"></div>
<div style="left:274px;top:551px;width:1344px;height:28px;background:#ebf2f6;"></div>
<div style="left:274px;top:607px;width:1344px;height:28px;background:#ebf2f6;"></div>
<div style="left:274px;top:663px;width:1344px;height:28px;background:#ebf2f6;"></div>
<div style="left:274px;top:719px;width:1344px;height:28px;background:#ebf2f6;"></div>
<div style="left:274px;top:775px;width:1344px;height:28px;background:#ebf2f6;"></div>
<div style="left:274px;top:831px;width:1344px;height:22px;background:#ebf2f6;"></div>
<div style="left:274px;top:407px;width:1344px;height:1px;background:#e6e9ec;"></div>
<div style="left:303px;top:377px;width:1px;height:476px;background:#e2e6ea;"></div>
<div style="left:427px;top:377px;width:1px;height:476px;background:#e2e6ea;"></div>
<div style="left:664px;top:377px;width:1px;height:476px;background:#e2e6ea;"></div>
<div style="left:724px;top:377px;width:1px;height:476px;background:#e2e6ea;"></div>
<div style="left:784px;top:377px;width:1px;height:476px;background:#e2e6ea;"></div>
<div style="left:844px;top:377px;width:1px;height:476px;background:#e2e6ea;"></div>
<div style="left:934px;top:377px;width:1px;height:476px;background:#e2e6ea;"></div>
<div style="left:1024px;top:377px;width:1px;height:476px;background:#e2e6ea;"></div>
<div style="left:1084px;top:377px;width:1px;height:476px;background:#e2e6ea;"></div>
<div style="left:1144px;top:377px;width:1px;height:476px;background:#e2e6ea;"></div>
<div style="left:1234px;top:377px;width:1px;height:476px;background:#e2e6ea;"></div>
<div style="left:1294px;top:377px;width:1px;height:476px;background:#e2e6ea;"></div>
<div style="left:1384px;top:377px;width:1px;height:476px;background:#e2e6ea;"></div>
<div style="left:1449px;top:377px;width:1px;height:476px;background:#e2e6ea;"></div>
<div style="left:1509px;top:377px;width:1px;height:476px;background:#e2e6ea;"></div>
<div style="left:1599px;top:377px;width:1px;height:476px;background:#e2e6ea;"></div>
<div style="left:274px;top:437px;width:1344px;height:1.3px;background:#135f9a;"></div>
<div style="left:274px;top:466px;width:1344px;height:1.3px;background:#135f9a;"></div>
<div style="left:309.5px;top:382.8px;line-height:20px;font-size:12px;color:#333333;transform:scaleX(0.9778);transform-origin:0 50%;white-space:nowrap;">Name</div>
<div style="left:434.2px;top:382.8px;line-height:20px;font-size:12px;color:#333333;transform:scaleX(0.9846);transform-origin:0 50%;white-space:nowrap;">Description</div>
<div style="left:670.3px;top:382.8px;line-height:20px;font-size:12px;color:#333333;transform:scaleX(0.9368);transform-origin:0 50%;white-space:nowrap;">Brand</div>
<div style="left:730.3px;top:382.8px;line-height:20px;font-size:12px;color:#333333;transform:scaleX(0.9714);transform-origin:0 50%;white-space:nowrap;">Category</div>
<div style="left:790.3px;top:382.8px;line-height:20px;font-size:12px;color:#333333;transform:scaleX(0.9857);transform-origin:0 50%;white-space:nowrap;">Qty</div>
<div style="left:850.3px;top:382.8px;line-height:20px;font-size:12px;color:#333333;transform:scaleX(0.9543);transform-origin:0 50%;white-space:nowrap;">Open On PO</div>
<div style="left:940px;top:382.8px;line-height:20px;font-size:12px;color:#333333;transform:scaleX(0.9643);transform-origin:0 50%;white-space:nowrap;">Scanned Qty</div>
<div style="left:1390.6px;top:382.8px;line-height:20px;font-size:12px;color:#333333;transform:scaleX(0.9590);transform-origin:0 50%;white-space:nowrap;">Damaged</div>
<div style="left:1455.4px;top:382.8px;line-height:20px;font-size:12px;color:#333333;transform:scaleX(0.9680);transform-origin:0 50%;white-space:nowrap;">UOM</div>
<div style="left:1515.4px;top:382.8px;line-height:20px;font-size:12px;color:#333333;transform:scaleX(0.9994);transform-origin:0 50%;white-space:nowrap;">Item Location</div>
<div style="left:1030.8px;top:375.8px;line-height:20px;font-size:12px;color:#333333;transform:scaleX(0.9429);transform-origin:0 50%;white-space:nowrap;">Total</div>
<div style="left:1030.8px;top:390.8px;line-height:20px;font-size:12px;color:#333333;transform:scaleX(0.9473);transform-origin:0 50%;white-space:nowrap;">Units</div>
<div style="left:1090.3px;top:375.8px;line-height:20px;font-size:12px;color:#333333;transform:scaleX(0.9563);transform-origin:0 50%;white-space:nowrap;">Qty Per</div>
<div style="left:1090.3px;top:390.8px;line-height:20px;font-size:12px;color:#333333;transform:scaleX(0.9717);transform-origin:0 50%;white-space:nowrap;">Carton</div>
<div style="left:1150.5px;top:375.8px;line-height:20px;font-size:12px;color:#333333;transform:scaleX(1.0307);transform-origin:0 50%;white-space:nowrap;">Num. of</div>
<div style="left:1150.5px;top:390.8px;line-height:20px;font-size:12px;color:#333333;transform:scaleX(0.9591);transform-origin:0 50%;white-space:nowrap;">Cartons</div>
<div style="left:1240.8px;top:375.8px;line-height:20px;font-size:12px;color:#333333;transform:scaleX(0.9578);transform-origin:0 50%;white-space:nowrap;">Carton</div>
<div style="left:1240.8px;top:390.8px;line-height:20px;font-size:12px;color:#333333;transform:scaleX(0.9207);transform-origin:0 50%;white-space:nowrap;">Per Pallet</div>
<div style="left:1300.5px;top:375.8px;line-height:20px;font-size:12px;color:#333333;transform:scaleX(1.0307);transform-origin:0 50%;white-space:nowrap;">Num. of</div>
<div style="left:1300.5px;top:390.8px;line-height:20px;font-size:12px;color:#333333;transform:scaleX(0.9217);transform-origin:0 50%;white-space:nowrap;">Pallets</div>
<div style="left:1605.5px;top:375.8px;line-height:20px;font-size:12px;color:#333333;transform:scaleX(0.9294);transform-origin:0 50%;white-space:nowrap;">Ite</div>
<div style="left:1605.5px;top:390.8px;line-height:20px;font-size:12px;color:#333333;transform:scaleX(0.9126);transform-origin:0 50%;white-space:nowrap;">Co</div>
<div style="left:1618px;top:377px;width:15px;height:30px;background:#ffffff;"></div>
<div style="left:280px;top:384px;width:18px;height:18px;background:transparent;border:2px solid #0f5c99;border-radius:2px;"></div>
<div style="left:280px;top:414px;width:18px;height:18px;background:transparent;border:2px solid #0f5c99;border-radius:2px;"></div>
<div style="left:280px;top:443px;width:18px;height:18px;background:transparent;border:2px solid #0f5c99;border-radius:2px;"></div>
<div style="left:311px;top:413.3px;line-height:20px;font-size:12px;color:#222222;transform:scaleX(0.9045);transform-origin:0 50%;white-space:nowrap;">k12</div>
<div style="left:673.9px;top:413.3px;line-height:20px;font-size:12px;color:#222222;transform:scaleX(0.8230);transform-origin:0 50%;white-space:nowrap;">Tes...</div>
<svg style="left:706.7px;top:420px;" width="10" height="7" viewBox="0 0 10 7"><path d="M0 0 H9.5 L4.75 7 Z" fill="#c4c4c4"/></svg>
<svg style="left:766.6px;top:420px;" width="10" height="7" viewBox="0 0 10 7"><path d="M0 0 H9.5 L4.75 7 Z" fill="#c4c4c4"/></svg>
<svg style="left:706.7px;top:449px;" width="10" height="7" viewBox="0 0 10 7"><path d="M0 0 H9.5 L4.75 7 Z" fill="#c4c4c4"/></svg>
<svg style="left:766.6px;top:449px;" width="10" height="7" viewBox="0 0 10 7"><path d="M0 0 H9.5 L4.75 7 Z" fill="#c4c4c4"/></svg>
<div style="left:790.5px;top:413.3px;line-height:20px;font-size:12px;color:#222222;transform:scaleX(0.8241);transform-origin:0 50%;white-space:nowrap;">1</div>
<div style="left:850.5px;top:413.3px;line-height:20px;font-size:12px;color:#222222;transform:scaleX(0.8241);transform-origin:0 50%;white-space:nowrap;">1</div>
<div style="left:940px;top:413.3px;line-height:20px;font-size:12px;color:#e8202a;transform:scaleX(1.0159);transform-origin:0 50%;white-space:nowrap;">0 of 1</div>
<svg style="left:1073px;top:417px;" width="12" height="12" viewBox="0 0 12 12"><defs><radialGradient id="rg" cx="0.4" cy="0.35" r="0.7"><stop offset="0" stop-color="#ff8080"/><stop offset="0.6" stop-color="#ee1c1c"/><stop offset="1" stop-color="#d01010"/></radialGradient></defs><circle cx="6" cy="6" r="5" fill="url(#rg)"/></svg>
<div style="left:1226px;top:413.6px;width:4px;height:4px;background:#d0d0d0;"></div>
<div style="left:1226px;top:420.4px;width:4px;height:4px;background:#d0d0d0;"></div>
<div style="left:1226px;top:427.2px;width:4px;height:4px;background:#d0d0d0;"></div>
<div style="left:1441px;top:413.6px;width:4px;height:4px;background:#d0d0d0;"></div>
<div style="left:1441px;top:420.4px;width:4px;height:4px;background:#d0d0d0;"></div>
<div style="left:1441px;top:427.2px;width:4px;height:4px;background:#d0d0d0;"></div>
<div style="left:1607px;top:413.3px;line-height:20px;font-size:12px;color:#222222;transform:scaleX(0.8241);transform-origin:0 50%;white-space:nowrap;">$1</div>
<svg style="left:311px;top:445px;" width="15" height="13" viewBox="0 0 15 13"><rect x="0.7" y="0.5" width="13.5" height="4" fill="#0f5c99"/><rect x="0.7" y="6.3" width="13.5" height="1.4" fill="#2f74aa"/><rect x="0.7" y="8.8" width="13.5" height="1.4" fill="#2f74aa"/><rect x="0.7" y="11.3" width="13.5" height="1.4" fill="#2f74aa"/></svg>
<div style="left:329.7px;top:443.0px;line-height:20px;font-size:12px;color:#222222;transform:scaleX(1.0218);transform-origin:0 50%;white-space:nowrap;">ghgroup</div>
<svg style="left:644px;top:444px;" width="16" height="16" viewBox="0 0 16 16"><path d="M1.5 14.5 L2.5 10.5 L10.5 2.5 L13.5 5.5 L5.5 13.5 Z" fill="#0f5c99"/><path d="M11.5 1.5 L12.8 0.3 Q13.2 0 13.6 0.3 L15.7 2.4 Q16 2.8 15.7 3.2 L14.5 4.5 Z" fill="#0f5c99"/><path d="M1.5 14.5 L2.3 11.3 L4.7 13.7 Z" fill="#0f5c99"/></svg>
<div style="left:940px;top:443.2px;line-height:20px;font-size:12px;color:#e8202a;transform:scaleX(0.8990);transform-origin:0 50%;white-space:nowrap;">0</div>
<svg style="left:411px;top:478.0px;" width="10" height="7" viewBox="0 0 10 7"><path d="M0 0 H9.5 L4.75 7 Z" fill="#c4c4c4"/></svg>
<svg style="left:411px;top:506.0px;" width="10" height="7" viewBox="0 0 10 7"><path d="M0 0 H9.5 L4.75 7 Z" fill="#c4c4c4"/></svg>
<svg style="left:411px;top:534.0px;" width="10" height="7" viewBox="0 0 10 7"><path d="M0 0 H9.5 L4.75 7 Z" fill="#c4c4c4"/></svg>
<svg style="left:411px;top:562.0px;" width="10" height="7" viewBox="0 0 10 7"><path d="M0 0 H9.5 L4.75 7 Z" fill="#c4c4c4"/></svg>
<svg style="left:411px;top:590.0px;" width="10" height="7" viewBox="0 0 10 7"><path d="M0 0 H9.5 L4.75 7 Z" fill="#c4c4c4"/></svg>
<svg style="left:411px;top:618.0px;" width="10" height="7" viewBox="0 0 10 7"><path d="M0 0 H9.5 L4.75 7 Z" fill="#c4c4c4"/></svg>
<svg style="left:411px;top:646.0px;" width="10" height="7" viewBox="0 0 10 7"><path d="M0 0 H9.5 L4.75 7 Z" fill="#c4c4c4"/></svg>
<svg style="left:411px;top:674.0px;" width="10" height="7" viewBox="0 0 10 7"><path d="M0 0 H9.5 L4.75 7 Z" fill="#c4c4c4"/></svg>
<svg style="left:411px;top:702.0px;" width="10" height="7" viewBox="0 0 10 7"><path d="M0 0 H9.5 L4.75 7 Z" fill="#c4c4c4"/></svg>
<svg style="left:411px;top:730.0px;" width="10" height="7" viewBox="0 0 10 7"><path d="M0 0 H9.5 L4.75 7 Z" fill="#c4c4c4"/></svg>
<svg style="left:411px;top:758.0px;" width="10" height="7" viewBox="0 0 10 7"><path d="M0 0 H9.5 L4.75 7 Z" fill="#c4c4c4"/></svg>
<svg style="left:411px;top:786.0px;" width="10" height="7" viewBox="0 0 10 7"><path d="M0 0 H9.5 L4.75 7 Z" fill="#c4c4c4"/></svg>
<svg style="left:411px;top:814.0px;" width="10" height="7" viewBox="0 0 10 7"><path d="M0 0 H9.5 L4.75 7 Z" fill="#c4c4c4"/></svg>
<svg style="left:411px;top:842.0px;" width="10" height="7" viewBox="0 0 10 7"><path d="M0 0 H9.5 L4.75 7 Z" fill="#c4c4c4"/></svg>
<div style="left:1622px;top:423px;width:8px;height:193px;background:#dadada;"></div>
<svg style="left:1621px;top:412px;" width="10" height="6" viewBox="0 0 10 6"><path d="M0.5 5.5 L5 1 L9.5 5.5" fill="none" stroke="#dddddd" stroke-width="1"/></svg>
<svg style="left:1621px;top:843px;" width="10" height="6" viewBox="0 0 10 6"><path d="M0.5 0.5 L5 5 L9.5 0.5" fill="none" stroke="#dddddd" stroke-width="1"/></svg>
<div style="left:288px;top:857px;width:1174px;height:7px;background:#dadada;"></div>
<svg style="left:278px;top:856px;" width="6" height="10" viewBox="0 0 6 10"><path d="M5.5 0.5 L1 5 L5.5 9.5" fill="none" stroke="#dddddd" stroke-width="1"/></svg>
<svg style="left:1608px;top:856px;" width="6" height="10" viewBox="0 0 6 10"><path d="M0.5 0.5 L5 5 L0.5 9.5" fill="none" stroke="#dddddd" stroke-width="1"/></svg>
<svg style="left:306px;top:462px;" width="32" height="64" viewBox="0 0 32 64"><defs><filter id="sh" x="-50%" y="-50%" width="200%" height="200%"><feGaussianBlur in="SourceAlpha" stdDeviation="1.5"/><feOffset dx="2" dy="2"/><feComponentTransfer><feFuncA type="linear" slope="0.8"/></feComponentTransfer><feMerge><feMergeNode/><feMergeNode in="SourceGraphic"/></feMerge></filter></defs><path d="M15.2 4.5 L25 21 L20 20.5 L20.3 54 Q20.3 58.5 15.5 58.5 Q10.5 58.5 10.5 54 L10 20.5 L5 21 Z" fill="#f45b4b" filter="url(#sh)"/></svg>
<div style="left:273px;top:880.8px;line-height:20px;font-size:11.5px;color:#555555;transform:scaleX(0.9159);transform-origin:0 50%;white-space:nowrap;">TERMS AND CONDITIONS</div>
<div style="left:273px;top:901px;width:583px;height:83px;background:#f4f4f4;border-radius:3px;border:1px solid #ececec;"></div>
<div style="left:279.4px;top:904.0px;line-height:20px;font-size:12px;color:#aaaaaa;transform:scaleX(0.9877);transform-origin:0 50%;white-space:nowrap;">Terms and conditions</div>
<div style="left:870.8px;top:880.8px;line-height:20px;font-size:11.5px;color:#555555;transform:scaleX(0.8532);transform-origin:0 50%;white-space:nowrap;">NOTES</div>
<div style="left:870px;top:901px;width:576px;height:83px;background:#f4f4f4;border-radius:3px;border:1px solid #ececec;"></div>
<svg style="left:1426px;top:964px;" width="16" height="16" viewBox="0 0 16 16"><path d="M1.5 14.5 L2.5 10.5 L10.5 2.5 L13.5 5.5 L5.5 13.5 Z" fill="#0f5c99"/><path d="M11.5 1.5 L12.8 0.3 Q13.2 0 13.6 0.3 L15.7 2.4 Q16 2.8 15.7 3.2 L14.5 4.5 Z" fill="#0f5c99"/><path d="M1.5 14.5 L2.3 11.3 L4.7 13.7 Z" fill="#0f5c99"/></svg>
<div style="left:1467px;top:896.7px;line-height:20px;font-size:11.5px;color:#555555;transform:scaleX(0.8791);transform-origin:0 50%;white-space:nowrap;">CARTON TOTAL:</div>
<div style="left:1551.3px;top:897.0px;line-height:20px;font-size:12.5px;color:#444444;transform:scaleX(0.9350);transform-origin:0 50%;white-space:nowrap;">0</div>
<div style="left:1467px;top:914.7px;line-height:20px;font-size:11.5px;color:#555555;transform:scaleX(0.8853);transform-origin:0 50%;white-space:nowrap;">ORIGINAL QTY:</div>
<div style="left:1545.9px;top:915.0px;line-height:20px;font-size:12.5px;color:#444444;transform:scaleX(0.9741);transform-origin:0 50%;white-space:nowrap;">3.00</div>
<div style="left:1467px;top:932.6px;line-height:20px;font-size:11.5px;color:#555555;transform:scaleX(0.8569);transform-origin:0 50%;white-space:nowrap;">RECEIVING QTY:</div>
<div style="left:1551.3px;top:932.9px;line-height:20px;font-size:12.5px;color:#444444;transform:scaleX(0.9618);transform-origin:0 50%;white-space:nowrap;">2.00</div>
<div style="left:1467px;top:950.5px;line-height:20px;font-size:11.5px;color:#555555;transform:scaleX(0.8913);transform-origin:0 50%;white-space:nowrap;">ORIGINAL TOTAL:</div>
<div style="left:1558.5px;top:950.8px;line-height:20px;font-size:12.5px;color:#444444;transform:scaleX(0.9730);transform-origin:0 50%;white-space:nowrap;">$22.00</div>
<div style="left:1467px;top:970.0px;line-height:20px;font-size:11.5px;color:#555555;transform:scaleX(0.8677);transform-origin:0 50%;white-space:nowrap;">RECEIVING TOTAL:</div>
<div style="left:1563.4px;top:970.2px;line-height:20px;font-size:16px;color:#333333;font-weight:700;transform:scaleX(0.9890);transform-origin:0 50%;white-space:nowrap;">$10.00</div>
<div style="left:273px;top:997px;width:75px;height:25px;background:#c8c8c8;border-radius:1px;"></div>
<div style="left:292.3px;top:999.7px;line-height:20px;font-size:12px;color:#ffffff;transform:scaleX(0.7969);transform-origin:0 50%;white-space:nowrap;">DELETE</div>
<div style="left:373px;top:1005px;width:24px;height:9px;background:#e0e0e0;border-radius:4.5px;"></div>
<svg style="left:371px;top:1003px;" width="14" height="14" viewBox="0 0 14 14"><circle cx="7" cy="7" r="6" fill="#b5b5b5"/></svg>
<div style="left:406px;top:999.7px;line-height:20px;font-size:12px;color:#222222;transform:scaleX(0.9958);transform-origin:0 50%;white-space:nowrap;">Vendor Consignment</div>
<div style="left:1370px;top:999px;width:75px;height:25px;background:#ebebeb;border-radius:1px;"></div>
<div style="left:1385.2px;top:1001.5px;line-height:20px;font-size:12px;color:#1a64a0;transform:scaleX(0.9038);transform-origin:0 50%;white-space:nowrap;">CANCEL</div>
<div style="left:1455px;top:999px;width:94px;height:25px;background:#055d98;border-radius:1px;"></div>
<div style="left:1470px;top:1001.5px;line-height:20px;font-size:12px;color:#ffffff;transform:scaleX(0.8676);transform-origin:0 50%;white-space:nowrap;">SAVE DRAFT</div>
<div style="left:1559px;top:999px;width:75px;height:25px;background:#c8c8c8;border-radius:1px;"></div>
<div style="left:1584.1px;top:1001.5px;line-height:20px;font-size:12px;color:#ffffff;transform:scaleX(0.8224);transform-origin:0 50%;white-space:nowrap;">SAVE</div>
<div style="left:1667.3px;top:211.8px;line-height:20px;font-size:13px;color:#222222;transform:scaleX(0.9665);transform-origin:0 50%;white-space:nowrap;-webkit-text-stroke:0.3px #222;">SUMMARY</div>
<div style="left:1667.3px;top:240.0px;line-height:20px;font-size:11.5px;color:#666666;transform:scaleX(0.9903);transform-origin:0 50%;white-space:nowrap;">Phone Number</div>
<div style="left:1667.3px;top:259.0px;line-height:20px;font-size:11.5px;color:#666666;transform:scaleX(0.9994);transform-origin:0 50%;white-space:nowrap;">Account Number</div>
<div style="left:1667.3px;top:278.0px;line-height:20px;font-size:11.5px;color:#666666;transform:scaleX(0.9331);transform-origin:0 50%;white-space:nowrap;">Payment Terms Type</div>
<div style="right:12px;top:278.0px;line-height:20px;font-size:11.5px;color:#222222;transform:scaleX(0.9946);transform-origin:100% 50%;white-space:nowrap;">Net 30</div>
<div style="left:1651px;top:311px;width:269px;height:2px;background:#eeeeee;"></div>
<div style="left:1664.3px;top:325.8px;line-height:20px;font-size:13px;color:#222222;transform:scaleX(0.9214);transform-origin:0 50%;white-space:nowrap;-webkit-text-stroke:0.3px #222;">RECENT TRANSACTION</div>
<div style="left:1665.3px;top:352.2px;line-height:20px;font-size:11px;color:#7a7a7a;transform:scaleX(0.9936);transform-origin:0 50%;white-space:nowrap;">04/08/2021</div>
<div style="left:1728.3px;top:351.4px;line-height:20px;font-size:12px;color:#0d5e9c;transform:scaleX(0.9566);transform-origin:0 50%;white-space:nowrap;">PO-0013188</div>
<div style="right:2.2000000000000455px;top:351.4px;line-height:20px;font-size:11.5px;color:#111111;transform:scaleX(0.9589);transform-origin:100% 50%;white-space:nowrap;">$-12.00</div>
<div style="left:1665.3px;top:373.1px;line-height:20px;font-size:11px;color:#7a7a7a;transform:scaleX(0.9936);transform-origin:0 50%;white-space:nowrap;">04/08/2021</div>
<div style="left:1728.3px;top:372.3px;line-height:20px;font-size:12px;color:#0d5e9c;transform:scaleX(0.9566);transform-origin:0 50%;white-space:nowrap;">PO-0013182</div>
<div style="right:2.2000000000000455px;top:372.3px;line-height:20px;font-size:11.5px;color:#111111;transform:scaleX(0.9589);transform-origin:100% 50%;white-space:nowrap;">$-10.00</div>
<div style="left:1665.3px;top:394.1px;line-height:20px;font-size:11px;color:#7a7a7a;transform:scaleX(0.9936);transform-origin:0 50%;white-space:nowrap;">04/08/2021</div>
<div style="left:1728.3px;top:393.3px;line-height:20px;font-size:12px;color:#0d5e9c;transform:scaleX(0.9892);transform-origin:0 50%;white-space:nowrap;">SLT-0000134</div>
<div style="left:1665.3px;top:415.1px;line-height:20px;font-size:11px;color:#7a7a7a;transform:scaleX(0.9936);transform-origin:0 50%;white-space:nowrap;">04/08/2021</div>
<div style="left:1728.3px;top:414.2px;line-height:20px;font-size:12px;color:#0d5e9c;transform:scaleX(0.9358);transform-origin:0 50%;white-space:nowrap;">IRC-0013170</div>
<div style="right:2.2000000000000455px;top:414.2px;line-height:20px;font-size:11.5px;color:#111111;transform:scaleX(0.9173);transform-origin:100% 50%;white-space:nowrap;">$0.00</div>
<div style="left:1665.3px;top:436.0px;line-height:20px;font-size:11px;color:#7a7a7a;transform:scaleX(0.9936);transform-origin:0 50%;white-space:nowrap;">04/08/2021</div>
<div style="left:1728.3px;top:435.2px;line-height:20px;font-size:12px;color:#0d5e9c;transform:scaleX(0.9486);transform-origin:0 50%;white-space:nowrap;">B-0013170</div>
<div style="right:2.2000000000000455px;top:435.2px;line-height:20px;font-size:11.5px;color:#111111;transform:scaleX(0.9173);transform-origin:100% 50%;white-space:nowrap;">$0.00</div>
<div style="left:1665.3px;top:456.9px;line-height:20px;font-size:11px;color:#7a7a7a;transform:scaleX(0.9936);transform-origin:0 50%;white-space:nowrap;">04/07/2021</div>
<div style="left:1728.3px;top:456.1px;line-height:20px;font-size:12px;color:#0d5e9c;transform:scaleX(0.9404);transform-origin:0 50%;white-space:nowrap;">PO-0013177</div>
<div style="right:2.2000000000000455px;top:456.1px;line-height:20px;font-size:11.5px;color:#111111;transform:scaleX(0.9173);transform-origin:100% 50%;white-space:nowrap;">$0.00</div>
<div style="left:1665.3px;top:477.9px;line-height:20px;font-size:11px;color:#7a7a7a;transform:scaleX(0.9936);transform-origin:0 50%;white-space:nowrap;">04/07/2021</div>
<div style="left:1728.3px;top:477.1px;line-height:20px;font-size:12px;color:#0d5e9c;transform:scaleX(0.9449);transform-origin:0 50%;white-space:nowrap;">PO-0013175</div>
<div style="right:2.2000000000000455px;top:477.1px;line-height:20px;font-size:11.5px;color:#111111;transform:scaleX(0.9512);transform-origin:100% 50%;white-space:nowrap;">$-56.00</div>
<div style="left:1665.3px;top:498.8px;line-height:20px;font-size:11px;color:#7a7a7a;transform:scaleX(0.9936);transform-origin:0 50%;white-space:nowrap;">04/07/2021</div>
<div style="left:1728.3px;top:498.0px;line-height:20px;font-size:12px;color:#0d5e9c;transform:scaleX(0.9537);transform-origin:0 50%;white-space:nowrap;">PO-0013167</div>
<div style="right:2.2000000000000455px;top:498.0px;line-height:20px;font-size:11.5px;color:#111111;transform:scaleX(0.9512);transform-origin:100% 50%;white-space:nowrap;">$-20.00</div>
<div style="left:1665.3px;top:519.8px;line-height:20px;font-size:11px;color:#7a7a7a;transform:scaleX(0.9936);transform-origin:0 50%;white-space:nowrap;">04/07/2021</div>
<div style="left:1728.3px;top:519.0px;line-height:20px;font-size:12px;color:#0d5e9c;transform:scaleX(0.9588);transform-origin:0 50%;white-space:nowrap;">B-0013163</div>
<div style="right:2.2000000000000455px;top:519.0px;line-height:20px;font-size:11.5px;color:#111111;transform:scaleX(0.9173);transform-origin:100% 50%;white-space:nowrap;">$0.00</div>
<div style="left:1665.3px;top:540.7px;line-height:20px;font-size:11px;color:#7a7a7a;transform:scaleX(0.9936);transform-origin:0 50%;white-space:nowrap;">04/07/2021</div>
<div style="left:1728.3px;top:539.9px;line-height:20px;font-size:12px;color:#0d5e9c;transform:scaleX(0.9610);transform-origin:0 50%;white-space:nowrap;">PO-0013165</div>
<div style="right:2.2000000000000455px;top:539.9px;line-height:20px;font-size:11.5px;color:#111111;transform:scaleX(0.9512);transform-origin:100% 50%;white-space:nowrap;">$-40.00</div>
<div style="left:1665.3px;top:561.7px;line-height:20px;font-size:11px;color:#7a7a7a;transform:scaleX(0.9936);transform-origin:0 50%;white-space:nowrap;">04/07/2021</div>
<div style="left:1728.3px;top:560.9px;line-height:20px;font-size:12px;color:#0d5e9c;transform:scaleX(0.9610);transform-origin:0 50%;white-space:nowrap;">PO-0013163</div>
<div style="right:2.2000000000000455px;top:560.9px;line-height:20px;font-size:11.5px;color:#111111;transform:scaleX(0.9173);transform-origin:100% 50%;white-space:nowrap;">$0.00</div>
<div style="left:1665.3px;top:582.6px;line-height:20px;font-size:11px;color:#7a7a7a;transform:scaleX(0.9936);transform-origin:0 50%;white-space:nowrap;">04/07/2021</div>
<div style="left:1728.3px;top:581.8px;line-height:20px;font-size:12px;color:#0d5e9c;transform:scaleX(1.0269);transform-origin:0 50%;white-space:nowrap;">B-0096453</div>
<div style="right:2.2000000000000455px;top:581.8px;line-height:20px;font-size:11.5px;color:#111111;transform:scaleX(0.9512);transform-origin:100% 50%;white-space:nowrap;">$-20.00</div>
<div style="left:1665.3px;top:603.6px;line-height:20px;font-size:11px;color:#7a7a7a;transform:scaleX(0.9936);transform-origin:0 50%;white-space:nowrap;">04/07/2021</div>
<div style="left:1728.3px;top:602.8px;line-height:20px;font-size:12px;color:#0d5e9c;transform:scaleX(1.0269);transform-origin:0 50%;white-space:nowrap;">B-0096452</div>
<div style="right:2.2000000000000455px;top:602.8px;line-height:20px;font-size:11.5px;color:#111111;transform:scaleX(0.9512);transform-origin:100% 50%;white-space:nowrap;">$-20.00</div>
<div style="left:1665.3px;top:624.5px;line-height:20px;font-size:11px;color:#7a7a7a;transform:scaleX(0.9936);transform-origin:0 50%;white-space:nowrap;">04/07/2021</div>
<div style="left:1728.3px;top:623.8px;line-height:20px;font-size:12px;color:#0d5e9c;transform:scaleX(1.0151);transform-origin:0 50%;white-space:nowrap;">VC-0000092</div>
<div style="right:2.2000000000000455px;top:623.8px;line-height:20px;font-size:11.5px;color:#111111;transform:scaleX(0.9173);transform-origin:100% 50%;white-space:nowrap;">$0.00</div>
<div style="left:1665.3px;top:645.5px;line-height:20px;font-size:11px;color:#7a7a7a;transform:scaleX(0.9936);transform-origin:0 50%;white-space:nowrap;">04/07/2021</div>
<div style="left:1728.3px;top:644.7px;line-height:20px;font-size:12px;color:#0d5e9c;transform:scaleX(0.9913);transform-origin:0 50%;white-space:nowrap;">VC-0000091</div>
<div style="right:2.2000000000000455px;top:644.7px;line-height:20px;font-size:11.5px;color:#111111;transform:scaleX(0.9304);transform-origin:100% 50%;white-space:nowrap;">$1,090.00</div>
<div style="left:1651px;top:1034px;width:269px;height:6px;background:#e8e8e8;"></div>
</body></html>
